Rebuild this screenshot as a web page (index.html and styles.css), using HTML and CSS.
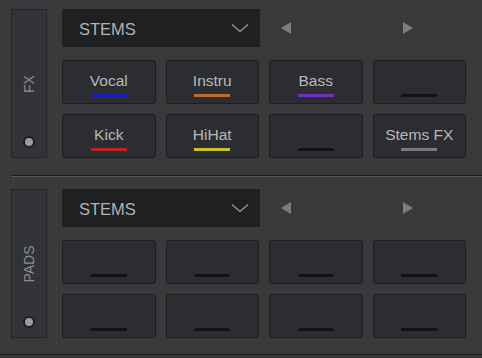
FILE: index.html
```html
<!DOCTYPE html>
<html lang="en">
<head>
    <meta charset="UTF-8">
    <title>Stems</title>
    <link rel="stylesheet" href="styles.css">
</head>
<body>
    <div class="deck">
        <!-- FX -->
        <div class="section">
            <div class="side">
                <span class="side-label">FX</span>
                <span class="dot"></span>
            </div>
            <div class="main">
                <div class="head">
                    <div class="select">
                        <span>STEMS</span>
                        <svg class="chevron" width="18" height="10" viewBox="0 0 18 10"><path d="M1 1.5 L9 8.5 L17 1.5" fill="none" stroke="#8a8a8c" stroke-width="1.6"/></svg>
                    </div>
                    <svg class="arrow arrow-left" width="10" height="12" viewBox="0 0 10 12"><path d="M10 0 L0 6 L10 12 Z" fill="#7c7c7e"/></svg>
                    <svg class="arrow arrow-right" width="10" height="12" viewBox="0 0 10 12"><path d="M0 0 L10 6 L0 12 Z" fill="#7c7c7e"/></svg>
                </div>
                <div class="grid">
                    <div class="pad"><span class="label">Vocal</span><span class="bar blue"></span></div>
                    <div class="pad"><span class="label">Instru</span><span class="bar orange"></span></div>
                    <div class="pad"><span class="label">Bass</span><span class="bar purple"></span></div>
                    <div class="pad"><span class="label"></span><span class="bar"></span></div>
                    <div class="pad"><span class="label">Kick</span><span class="bar red"></span></div>
                    <div class="pad"><span class="label">HiHat</span><span class="bar yellow"></span></div>
                    <div class="pad"><span class="label"></span><span class="bar"></span></div>
                    <div class="pad"><span class="label">Stems FX</span><span class="bar grey"></span></div>
                </div>
            </div>
        </div>

        <div class="divider"></div>

        <!-- PADS -->
        <div class="section">
            <div class="side">
                <span class="side-label">PADS</span>
                <span class="dot"></span>
            </div>
            <div class="main">
                <div class="head">
                    <div class="select">
                        <span>STEMS</span>
                        <svg class="chevron" width="18" height="10" viewBox="0 0 18 10"><path d="M1 1.5 L9 8.5 L17 1.5" fill="none" stroke="#8a8a8c" stroke-width="1.6"/></svg>
                    </div>
                    <svg class="arrow arrow-left" width="10" height="12" viewBox="0 0 10 12"><path d="M10 0 L0 6 L10 12 Z" fill="#7c7c7e"/></svg>
                    <svg class="arrow arrow-right" width="10" height="12" viewBox="0 0 10 12"><path d="M0 0 L10 6 L0 12 Z" fill="#7c7c7e"/></svg>
                </div>
                <div class="grid">
                    <div class="pad"><span class="label"></span><span class="bar"></span></div>
                    <div class="pad"><span class="label"></span><span class="bar"></span></div>
                    <div class="pad"><span class="label"></span><span class="bar"></span></div>
                    <div class="pad"><span class="label"></span><span class="bar"></span></div>
                    <div class="pad"><span class="label"></span><span class="bar"></span></div>
                    <div class="pad"><span class="label"></span><span class="bar"></span></div>
                    <div class="pad"><span class="label"></span><span class="bar"></span></div>
                    <div class="pad"><span class="label"></span><span class="bar"></span></div>
                </div>
            </div>
        </div>

        <div class="bottom-line"></div>
    </div>
</body>
</html>
```

FILE: styles.css
```css
body {
    margin: 0;
    background-color: #39393c;
    background-image: linear-gradient(90deg, transparent 0, transparent 62px, #39393c 62px),
        repeating-linear-gradient(90deg, rgba(255,255,255,0.012) 0 2px, rgba(0,0,0,0.025) 2px 4px);
    font-family: 'Liberation Sans', Arial, sans-serif;
    color: #b6b6b8;
    overflow: hidden;
}
.deck {
    padding-top: 9px;
}
.section {
    display: flex;
    gap: 15px;
    padding-left: 11px;
    height: 149px;
}
.side {
    position: relative;
    width: 36px;
    box-sizing: border-box;
    border: 1px solid #252527;
    background: #323336;
    display: flex;
    align-items: center;
    justify-content: center;
}
.side-label {
    transform: rotate(-90deg);
    font-size: 14px;
    color: #8c8c8e;
    white-space: nowrap;
}
.dot {
    position: absolute;
    left: 11px;
    bottom: 9px;
    width: 8px;
    height: 8px;
    border: 2px solid #1e1e20;
    border-radius: 50%;
    background: #9c9c9e;
}
.main {
    width: 404px;
}
.head {
    display: flex;
    align-items: center;
    height: 38px;
}
.select {
    width: 198px;
    height: 38px;
    box-sizing: border-box;
    padding: 2px 11px 0 17px;
    background: #1f2022;
    display: flex;
    align-items: center;
    justify-content: space-between;
    font-size: 16.5px;
    color: #b2b2b4;
}
.chevron {
    display: block;
    margin-top: -2px;
}
.arrow {
    display: block;
}
.arrow-left {
    margin-left: 21px;
}
.arrow-right {
    margin-left: 112px;
}
.grid {
    margin-top: 13px;
    display: grid;
    grid-template-columns: repeat(4, 1fr);
    grid-auto-rows: 44px;
    gap: 10px;
}
.pad {
    box-sizing: border-box;
    border: 1px solid #1c1d1f;
    border-radius: 3px;
    background: #2c2d31;
    padding-top: 11px;
    display: flex;
    flex-direction: column;
    align-items: center;
}
.label {
    height: 17px;
    line-height: 17px;
    font-size: 15.5px;
    color: #b8b8ba;
    white-space: nowrap;
}
.bar {
    margin-top: 5px;
    width: 36px;
    height: 3px;
    background: #131315;
}
.blue { background: #1c1cbc; }
.orange { background: #c0692a; }
.purple { background: #6f2ec4; }
.red { background: #c22222; }
.yellow { background: #c9c222; }
.grey { background: #7a7a7c; }
.divider {
    margin: 17px 0 12px 11px;
    height: 1px;
    background: #1e1e20;
    border-bottom: 1px solid #58585a;
}
.bottom-line {
    margin-top: 16px;
    height: 1px;
    background: #1c1c1e;
}
```
